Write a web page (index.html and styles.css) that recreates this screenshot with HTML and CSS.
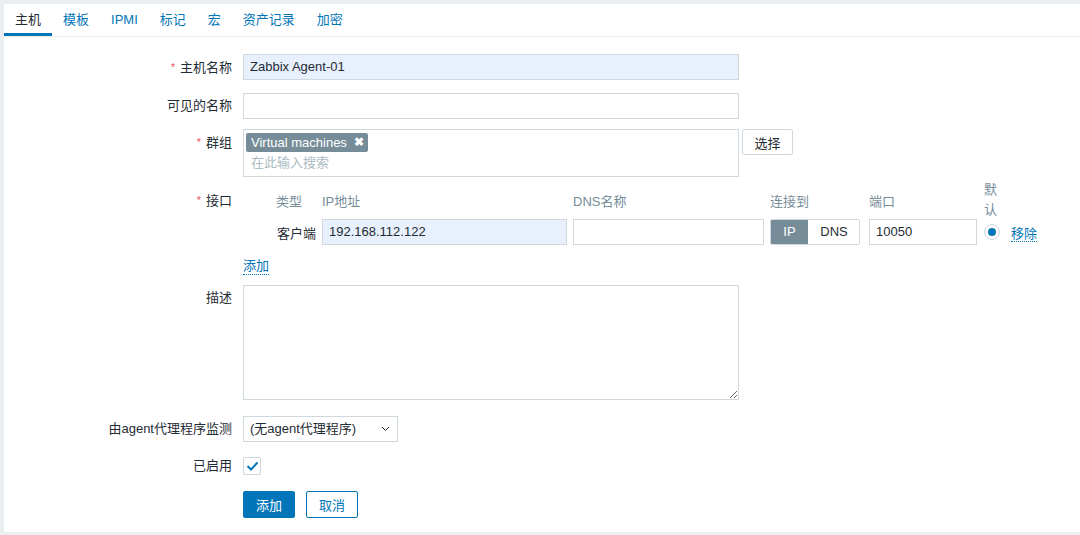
FILE: index.html
```html
<!DOCTYPE html>
<html lang="zh-CN">
<head>
<meta charset="utf-8">
<title>主机</title>
<link rel="stylesheet" href="styles.css">
</head>
<body>
<div class="panel">
  <div class="tabs">
    <span class="tab active">主机</span>
    <span class="tab">模板</span>
    <span class="tab">IPMI</span>
    <span class="tab">标记</span>
    <span class="tab">宏</span>
    <span class="tab">资产记录</span>
    <span class="tab">加密</span>
  </div>
  <div class="form">
    <div class="row r1">
      <div class="label"><span class="req">*</span>主机名称</div>
      <div class="field"><div class="input filled wide">Zabbix Agent-01</div></div>
    </div>
    <div class="row r2">
      <div class="label">可见的名称</div>
      <div class="field"><div class="input wide"></div></div>
    </div>
    <div class="row r3">
      <div class="label"><span class="req">*</span>群组</div>
      <div class="field inline">
        <div class="multi">
          <span class="chip">Virtual machines<span class="chip-x">✖</span></span>
          <div class="ph">在此输入搜索</div>
        </div>
        <button class="btn-grey">选择</button>
      </div>
    </div>
    <div class="row r4">
      <div class="label lbl-iface"><span class="req">*</span>接口</div>
      <div class="field">
        <div class="iface">
          <div class="h">类型</div>
          <div class="h">IP地址</div>
          <div class="h">DNS名称</div>
          <div class="h">连接到</div>
          <div class="h">端口</div>
          <div class="h hdef">默认</div>
          <div></div>
          <div class="type">客户端</div>
          <div class="input filled">192.168.112.122</div>
          <div class="input"></div>
          <div class="toggle"><span class="seg on">IP</span><span class="seg">DNS</span></div>
          <div class="input">10050</div>
          <div class="radio"><span class="dot"></span></div>
          <div><span class="link">移除</span></div>
        </div>
      </div>
    </div>
    <div class="row r5">
      <div class="label"></div>
      <div class="field"><span class="link add">添加</span></div>
    </div>
    <div class="row r6">
      <div class="label">描述</div>
      <div class="field"><textarea class="ta"></textarea></div>
    </div>
    <div class="row r7">
      <div class="label">由agent代理程序监测</div>
      <div class="field">
        <div class="select">(无agent代理程序)
          <svg class="chev" width="9" height="6" viewBox="0 0 9 6"><path d="M1 1 L4.5 4.5 L8 1" fill="none" stroke="#1f2c33" stroke-width="1"/></svg>
        </div>
      </div>
    </div>
    <div class="row r8">
      <div class="label lbl-cb">已启用</div>
      <div class="field">
        <div class="cb"><svg width="13" height="10" viewBox="0 0 13 10"><path d="M1.5 5 L5 8.5 L11.5 1.5" fill="none" stroke="#0275b8" stroke-width="2"/></svg></div>
      </div>
    </div>
    <div class="row r9">
      <div class="label"></div>
      <div class="field inline">
        <button class="btn-primary">添加</button>
        <button class="btn-alt">取消</button>
      </div>
    </div>
  </div>
</div>
</body>
</html>
```
FILE: styles.css
```css
* { box-sizing: border-box; }
html, body { margin: 0; padding: 0; }
body {
  background: #ebeef0;
  font-family: "Liberation Sans", "Noto Sans CJK SC", sans-serif;
  font-size: 13px;
  color: #1f2c33;
  height: 535px;
  overflow: hidden;
}
.panel {
  margin: 4px 0 0 4px;
  height: 528px;
  background: #fff;
}
.tabs {
  display: flex;
  height: 33px;
  border-bottom: 1px solid #ebeef0;
}
.tab {
  padding: 0 11px;
  line-height: 32px;
  color: #0275b8;
  border-bottom: 3px solid transparent;
  height: 32px;
}
.tab.active {
  color: #1f2c33;
  border-bottom-color: #0275b8;
}
.form { padding-top: 17px; }
.row {
  display: grid;
  grid-template-columns: 228px 1fr;
  column-gap: 11px;
  align-items: start;
}
.r2 { margin-top: 12px; }
.r3 { margin-top: 10px; }
.r4 { margin-top: 4px; }
.r5 { margin-top: 13px; }
.r6 { margin-top: 10px; }
.r7 { margin-top: 16px; }
.r8 { margin-top: 15px; }
.r9 { margin-top: 16px; }
.label {
  text-align: right;
  line-height: 26px;
  white-space: nowrap;
}
.lbl-iface { padding-top: 6px; }
.lbl-cb { line-height: 18px; }
.req {
  color: #e45959;
  font-size: 11px;
  margin-right: 5px;
  vertical-align: 1px;
}
.field { min-width: 0; }
.inline { display: flex; align-items: flex-start; gap: 3px; }
.input {
  height: 26px;
  line-height: 24px;
  border: 1px solid #cfd8dc;
  padding: 0 6px;
  background: #fff;
  white-space: nowrap;
}
.input.filled { background: #e8f0fe; }
.wide { width: 496px; }
.multi {
  width: 496px;
  height: 48px;
  border: 1px solid #cfd8dc;
  padding: 3px 2px;
}
.chip {
  display: inline-flex;
  align-items: center;
  height: 19px;
  background: #768d99;
  color: #fff;
  border-radius: 2px;
  padding: 0 4px 0 5px;
  line-height: 19px;
}
.chip-x {
  font-size: 12px;
  margin-left: 7px;
  font-weight: bold;
}
.ph {
  color: #acbbc2;
  line-height: 21px;
  padding-left: 5px;
}
.btn-grey {
  font: inherit;
  height: 26px;
  width: 51px;
  background: #fff;
  border: 1px solid #cfd8dc;
  border-radius: 2px;
  color: #1f2c33;
  padding: 0;
}
.iface {
  display: grid;
  grid-template-columns: 40px 245px 191px 93px 108px 22px auto;
  grid-template-rows: 38px 26px;
  column-gap: 6px;
  padding-left: 33px;
  align-items: center;
}
.h { color: #768d99; white-space: nowrap; }
.hdef {
  white-space: normal;
  width: 14px;
  line-height: 20px;
  margin-left: 1px;
}
.type { text-align: right; white-space: nowrap; }
.toggle {
  display: flex;
  width: 90px;
  height: 26px;
  border: 1px solid #cfd8dc;
  border-radius: 2px;
  overflow: hidden;
}
.seg {
  flex: 0 0 52px;
  text-align: center;
  line-height: 24px;
}
.seg.on {
  flex: 0 0 37px;
  background: #768d99;
  color: #fff;
}
.radio {
  width: 16px;
  height: 16px;
  border: 1px solid #cfd8dc;
  border-radius: 50%;
  display: flex;
  align-items: center;
  justify-content: center;
  margin-left: 1px;
}
.dot {
  width: 8px;
  height: 8px;
  border-radius: 50%;
  background: #0275b8;
}
.link {
  color: #0275b8;
  border-bottom: 1px dotted #0275b8;
  white-space: nowrap;
}
.add {
  display: inline-block;
  line-height: 16px;
}
.ta {
  display: block;
  width: 496px;
  height: 115px;
  border: 1px solid #cfd8dc;
  margin: 0;
  resize: both;
  font: inherit;
}
.select {
  position: relative;
  width: 155px;
  height: 26px;
  line-height: 24px;
  border: 1px solid #cfd8dc;
  padding: 0 6px;
  white-space: nowrap;
}
.chev {
  position: absolute;
  right: 7px;
  top: 9px;
}
.r8 .field { height: 18px; }
.cb {
  width: 18px;
  height: 18px;
  border: 1px solid #cfd8dc;
  border-radius: 2px;
  display: flex;
  align-items: center;
  justify-content: center;
}
.btn-primary, .btn-alt {
  font: inherit;
  height: 27px;
  border-radius: 2px;
  padding: 0;
}
.btn-primary {
  width: 52px;
  background: #0275b8;
  border: 1px solid #0275b8;
  color: #fff;
}
.btn-alt {
  width: 52px;
  margin-left: 8px;
  background: #fff;
  border: 1px solid #0275b8;
  color: #0275b8;
}
```
